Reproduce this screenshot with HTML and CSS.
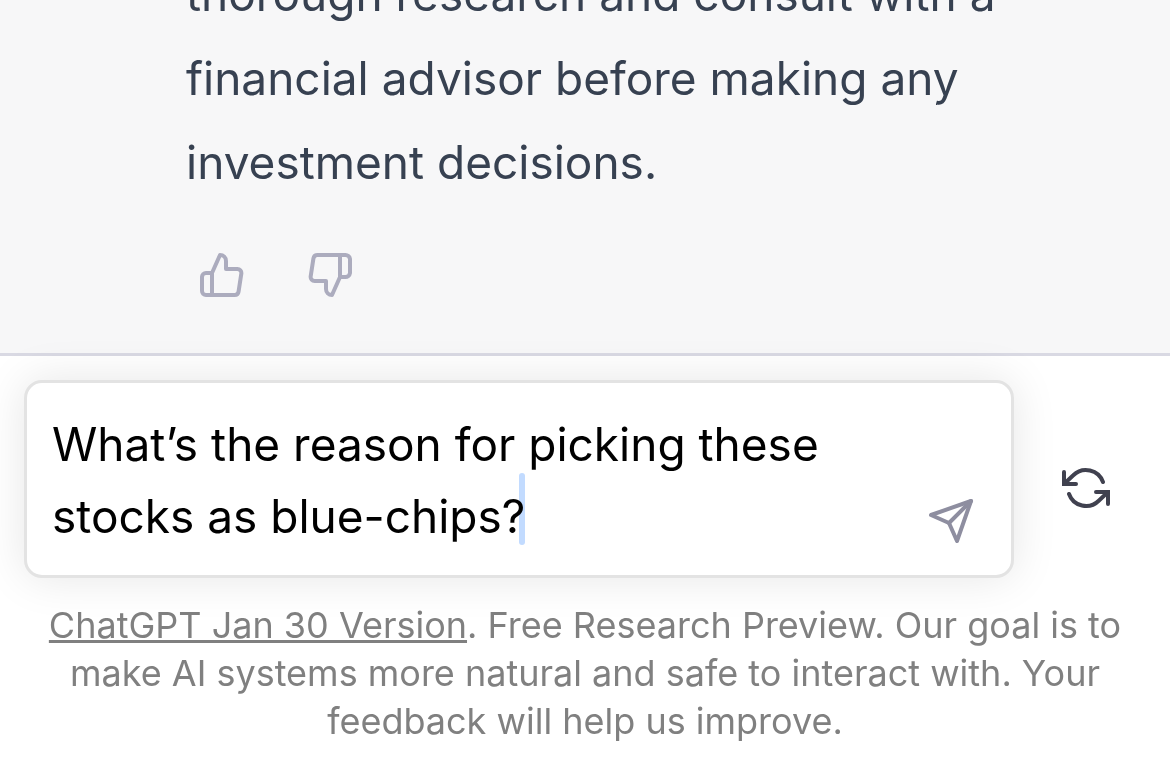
FILE: index.html
```
<!DOCTYPE html>
<html lang="en">
<head>
  <meta charset="UTF-8" />
  <meta name="viewport" content="width=device-width, initial-scale=1" />
  <title>ChatGPT</title>
  <link rel="stylesheet" href="styles.css">
</head>
<body>
  <!-- Conversation -->
  <main class="chat">
    <p class="message">
      thorough research and consult with a<br>
      financial advisor before making any<br>
      investment decisions.
    </p>
    <div class="feedback">
      <button class="icon-btn" type="button" aria-label="Good response">
        <svg class="icon" viewBox="0 0 24 24"><path d="M14 9V5a3 3 0 0 0-3-3l-4 9v11h11.28a2 2 0 0 0 2-1.7l1.38-9a2 2 0 0 0-2-2.3zM7 22H4a2 2 0 0 1-2-2v-7a2 2 0 0 1 2-2h3"/></svg>
      </button>
      <button class="icon-btn" type="button" aria-label="Bad response">
        <svg class="icon" viewBox="0 0 24 24"><path d="M10 15v4a3 3 0 0 0 3 3l4-9V2H5.72a2 2 0 0 0-2 1.7l-1.38 9a2 2 0 0 0 2 2.3zm7-13h2.67A2.31 2.31 0 0 1 22 4v7a2.31 2.31 0 0 1-2.33 2H17"/></svg>
      </button>
    </div>
  </main>

  <!-- Prompt box and footer -->
  <footer class="composer">
    <form class="prompt-row">
      <div class="prompt-box">
        <textarea class="prompt" rows="2" aria-label="Message" spellcheck="false">What’s the reason for picking these
stocks as blue-chips?</textarea>
        <span class="caret"></span>
        <button class="icon-btn send" type="submit" aria-label="Send message">
          <svg class="icon" viewBox="0 0 24 24"><path d="M22 2L11 13"/><path d="M22 2l-7 20-4-9-9-4 20-7z"/></svg>
        </button>
      </div>
      <button class="icon-btn regenerate" type="button" aria-label="Regenerate response">
        <svg class="icon" viewBox="0 0 24 24"><path class="arrow" d="M1 4v6h6"/><path class="arrow" d="M23 20v-6h-6"/><path d="M20.49 9A9 9 0 0 0 5.64 5.64L1 10m22 4l-4.64 4.36A9 9 0 0 1 3.51 15"/></svg>
      </button>
    </form>
    <p class="notice">
      <a href="#">ChatGPT Jan 30 Version</a>. Free Research Preview. Our goal is to make AI systems more natural and safe to interact with. Your feedback will help us improve.
    </p>
  </footer>
</body>
</html>
```
FILE: styles.css
```
* {
  margin: 0;
  padding: 0;
  box-sizing: border-box;
}

body {
  display: flex;
  flex-direction: column;
  height: 100vh;
  overflow: hidden;
  background: #fff;
  font-family: Inter, "Liberation Sans", sans-serif;
}

/* Conversation, scrolled to its end */
.chat {
  flex: 1;
  min-height: 0;
  display: flex;
  flex-direction: column;
  justify-content: flex-end;
  padding: 0 24px 42px 186px;
  overflow: hidden;
  background: #f7f7f8;
}

.message {
  font-size: 46px;
  line-height: 84px;
  color: #374151;
}

.feedback {
  display: flex;
  gap: 36px;
  margin-top: 35px;
  color: #acacbe;
}

.icon-btn {
  padding: 12px;
  border: none;
  background: none;
  color: inherit;
  cursor: pointer;
}

.icon {
  display: block;
  width: 48px;
  height: 48px;
  fill: none;
  stroke: currentColor;
  stroke-width: 2;
  stroke-linecap: round;
  stroke-linejoin: round;
}

.arrow {
  stroke-linejoin: miter;
}

/* Bottom area */
.composer {
  padding: 24px 24px 37px;
  border-top: 3px solid #d9d9e3;
}

.prompt-row {
  display: flex;
  align-items: flex-end;
  gap: 12px;
}

.prompt-box {
  position: relative;
  flex: 1;
  display: flex;
  align-items: flex-end;
  border: 3px solid #e3e3e3;
  border-radius: 18px;
  background: #fff;
  box-shadow: 0 0 45px rgba(0, 0, 0, 0.1);
}

.prompt {
  flex: 1;
  min-width: 0;
  padding: 25px 0 23px 25px;
  border: none;
  outline: none;
  resize: none;
  overflow: hidden;
  background: none;
  font: 46px/72px Inter, "Liberation Sans", sans-serif;
  color: #000;
}

/* Text cursor after the last word */
.caret {
  position: absolute;
  left: 492px;
  bottom: 30px;
  width: 6px;
  height: 72px;
  border-radius: 3px;
  background: #c2dbff;
  mix-blend-mode: multiply;
}

.send {
  margin: 0 24px 18px 0;
  color: #8e8ea0;
}

.regenerate {
  padding: 66px 36px;
  color: #40414f;
}

.notice {
  margin-top: 23px;
  font-size: 36px;
  line-height: 48px;
  text-align: center;
  color: #808080;
}

.notice a {
  color: inherit;
  text-decoration: underline;
  text-decoration-thickness: 3px;
}
```
